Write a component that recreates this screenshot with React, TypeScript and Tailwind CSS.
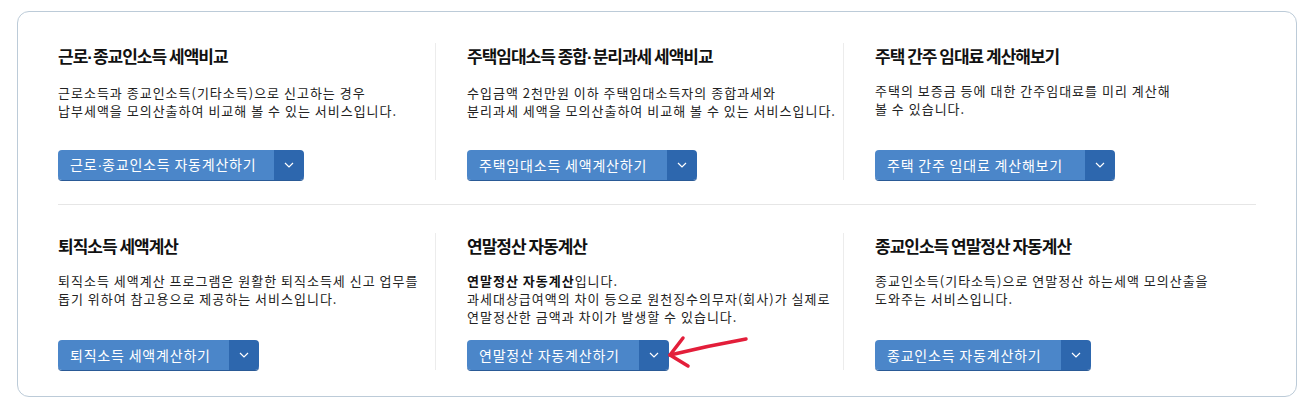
import React from "react";

type Item = {
  title: string;
  desc: React.ReactNode[];
  button: string;
  btnW: string;
};

const rows: Item[][] = [
  [
    {
      title: "근로·종교인소득 세액비교",
      desc: ["근로소득과 종교인소득(기타소득)으로 신고하는 경우", "납부세액을 모의산출하여 비교해 볼 수 있는 서비스입니다."],
      button: "근로·종교인소득 자동계산하기",
      btnW: "w-[216px]",
    },
    {
      title: "주택임대소득 종합·분리과세 세액비교",
      desc: ["수입금액 2천만원 이하 주택임대소득자의 종합과세와", "분리과세 세액을 모의산출하여 비교해 볼 수 있는 서비스입니다."],
      button: "주택임대소득 세액계산하기",
      btnW: "w-[200px]",
    },
    {
      title: "주택 간주 임대료 계산해보기",
      desc: ["주택의 보증금 등에 대한 간주임대료를 미리 계산해", "볼 수 있습니다."],
      button: "주택 간주 임대료 계산해보기",
      btnW: "w-[210px]",
    },
  ],
  [
    {
      title: "퇴직소득 세액계산",
      desc: ["퇴직소득 세액계산 프로그램은 원활한 퇴직소득세 신고 업무를", "돕기 위하여 참고용으로 제공하는 서비스입니다."],
      button: "퇴직소득 세액계산하기",
      btnW: "w-[171px]",
    },
    {
      title: "연말정산 자동계산",
      desc: [
        <>
          <b className="font-bold text-[#111]">연말정산 자동계산</b>입니다.
        </>,
        "과세대상급여액의 차이 등으로 원천징수의무자(회사)가 실제로",
        "연말정산한 금액과 차이가 발생할 수 있습니다.",
      ],
      button: "연말정산 자동계산하기",
      btnW: "w-[172px]",
    },
    {
      title: "종교인소득 연말정산 자동계산",
      desc: ["종교인소득(기타소득)으로 연말정산 하는세액 모의산출을", "도와주는 서비스입니다."],
      button: "종교인소득 자동계산하기",
      btnW: "w-[186px]",
    },
  ],
];

// the middle dot sits tight between words in the original
function tightDot(text: string) {
  const parts = text.split("·");
  return parts.map((p, i) => (
    <React.Fragment key={i}>
      {i > 0 && <span className="font-['Liberation_Sans'] tracking-normal">·</span>}
      {p}
    </React.Fragment>
  ));
}

function CalcButton({ label, width }: { label: string; width: string }) {
  return (
    <div className="mt-auto flex h-[30px] w-fit overflow-hidden rounded-[4px] shadow-[0_1px_0_#2a5a96]">
      <span className={`flex items-center bg-[#4b86c9] pl-3 text-[14px] tracking-[0.8px] text-white ${width}`}>
        <span>{tightDot(label)}</span>
      </span>
      <span className="flex w-[30px] items-center justify-center bg-[#2d67ae]">
        <svg width="10" height="6" viewBox="0 0 10 6" fill="none">
          <polyline points="1,1 5,5 9,1" stroke="#fff" strokeWidth="1.2" />
        </svg>
      </span>
    </div>
  );
}

function Row({ items, className }: { items: Item[]; className?: string }) {
  return (
    <div className={`grid h-[137px] grid-cols-[377px_408px_1fr] ${className ?? ""}`}>
      {items.map((it, i) => (
        <div
          key={it.title}
          className={`flex flex-col ${i > 0 ? "border-l border-[#ececec] pl-[31px]" : ""}`}
        >
          <h3 className="text-[17px] font-bold leading-[26px] tracking-[-1px] text-[#111]">{tightDot(it.title)}</h3>
          <div className="mt-[13px] text-[13px] leading-[18px] tracking-[1px] text-[#222]">
            {it.desc.map((line, j) => (
              <p key={j}>{line}</p>
            ))}
          </div>
          <CalcButton label={it.button} width={it.btnW} />
        </div>
      ))}
    </div>
  );
}

export default function App() {
  return (
    <div className="relative h-[403px] w-[1310px] overflow-hidden bg-white pt-[11px] pl-[17px] font-['Noto_Sans_CJK_KR',sans-serif]">
      <div className="h-[386px] w-[1280px] rounded-[12px] border border-[#bccbd8] bg-white px-[40px] pt-[31px] pb-[26px]">
        <Row items={rows[0]} />
        <div className="mt-[24px] h-px bg-[#e6e6e6]" />
        <Row items={rows[1]} className="mt-[28px]" />
      </div>

      {/* hand-drawn pointer */}
      <svg
        className="absolute left-[655px] top-[325px]"
        width="100"
        height="50"
        viewBox="0 0 100 50"
        fill="none"
      >
        <path d="M91 14 Q52 21 15 30" stroke="#e31e3a" strokeWidth="3.5" strokeLinecap="round" />
        <path d="M28 13 L15 30 L33 41" stroke="#e31e3a" strokeWidth="3.5" strokeLinecap="round" strokeLinejoin="round" />
      </svg>
    </div>
  );
}
